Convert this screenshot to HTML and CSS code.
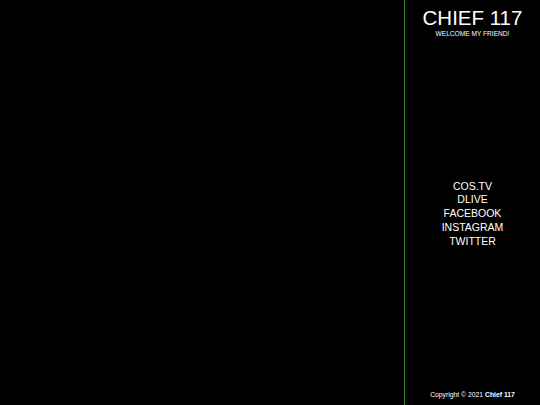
FILE: index.html
```html
<!DOCTYPE html>
<html>
<head>
<meta charset="utf-8">
<link rel="stylesheet" href="styles.css">
</head>
<body>
<div class="page">
  <main class="content"></main>
  <aside class="sidebar">
    <header class="brand">
      <h1 class="title">CHIEF 117</h1>
      <p class="tagline">WELCOME MY FRIEND!</p>
    </header>
    <nav class="links">
      <a href="#">COS.TV</a>
      <a href="#">DLIVE</a>
      <a href="#">FACEBOOK</a>
      <a href="#">INSTAGRAM</a>
      <a href="#">TWITTER</a>
    </nav>
    <footer class="copy">Copyright © 2021 <strong>Chief 117</strong></footer>
  </aside>
</div>
</body>
</html>
```
FILE: styles.css
```css
html, body {
  margin: 0;
  padding: 0;
  background: #000;
  color: #fff;
  font-family: "Liberation Sans", Arial, sans-serif;
}
.page {
  display: flex;
  height: 405px;
}
.content {
  flex: 1;
}
.sidebar {
  width: 135px;
  border-left: 1px solid #3a7f2c;
  display: flex;
  flex-direction: column;
  align-items: center;
  text-align: center;
}
.brand {
  padding-top: 6px;
}
.title {
  margin: 0;
  font-size: 20.5px;
  font-weight: normal;
  line-height: 23px;
}
.tagline {
  margin: 1px 0 0;
  font-size: 6.6px;
  line-height: 8px;
}
.links {
  flex: 1;
  display: flex;
  flex-direction: column;
  justify-content: center;
}
.links a {
  color: #fff;
  text-decoration: none;
  font-size: 10.5px;
  line-height: 13.8px;
}
.copy {
  font-size: 6.8px;
  line-height: 10px;
  padding-bottom: 5px;
}
```
